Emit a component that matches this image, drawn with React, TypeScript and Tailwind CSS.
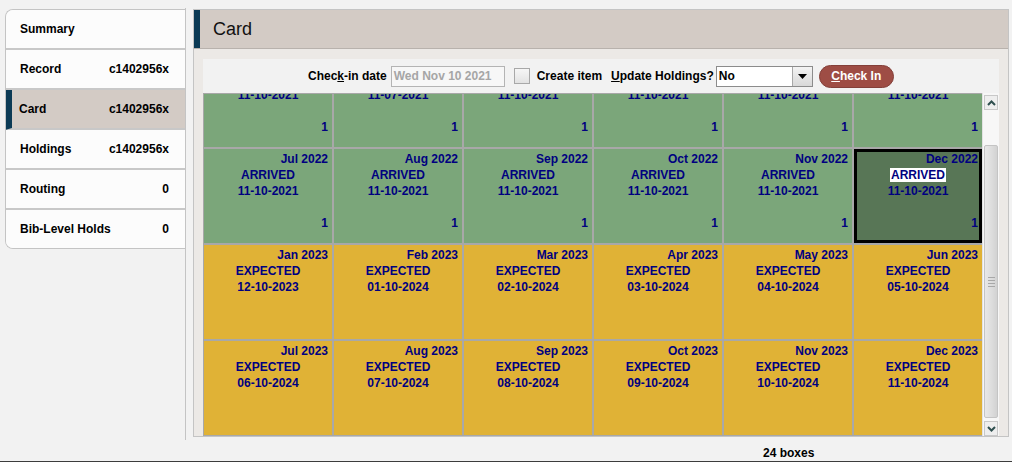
import React from "react";

// One box of the check-in card
interface Box {
  month: string;
  status: "ARRIVED" | "EXPECTED";
  date: string;
  count?: number;
  selected?: boolean;
}

const arrived = (month: string, date = "11-10-2021", selected = false): Box => ({
  month,
  status: "ARRIVED",
  date,
  count: 1,
  selected,
});

const expected = (month: string, date: string): Box => ({
  month,
  status: "EXPECTED",
  date,
});

const boxes: Box[] = [
  arrived("Jan 2022"),
  arrived("Feb 2022", "11-07-2021"),
  arrived("Mar 2022"),
  arrived("Apr 2022"),
  arrived("May 2022"),
  arrived("Jun 2022"),
  arrived("Jul 2022"),
  arrived("Aug 2022"),
  arrived("Sep 2022"),
  arrived("Oct 2022"),
  arrived("Nov 2022"),
  arrived("Dec 2022", "11-10-2021", true),
  expected("Jan 2023", "12-10-2023"),
  expected("Feb 2023", "01-10-2024"),
  expected("Mar 2023", "02-10-2024"),
  expected("Apr 2023", "03-10-2024"),
  expected("May 2023", "04-10-2024"),
  expected("Jun 2023", "05-10-2024"),
  expected("Jul 2023", "06-10-2024"),
  expected("Aug 2023", "07-10-2024"),
  expected("Sep 2023", "08-10-2024"),
  expected("Oct 2023", "09-10-2024"),
  expected("Nov 2023", "10-10-2024"),
  expected("Dec 2023", "11-10-2024"),
];

const navItems = [
  { label: "Summary", value: "" },
  { label: "Record", value: "c1402956x" },
  { label: "Card", value: "c1402956x", active: true },
  { label: "Holdings", value: "c1402956x" },
  { label: "Routing", value: "0" },
  { label: "Bib-Level Holds", value: "0" },
];

const Chevron: React.FC<{ up?: boolean }> = ({ up }) => (
  <svg width="9" height="6" viewBox="0 0 9 6">
    <polyline
      points={up ? "1,5 4.5,1.5 8,5" : "1,1 4.5,4.5 8,1"}
      fill="none"
      stroke="#2f4f4f"
      strokeWidth="2"
    />
  </svg>
);

const BoxCell: React.FC<{ box: Box }> = ({ box }) => {
  const bg = box.selected
    ? "bg-[#587656] shadow-[inset_0_0_0_3px_#000]"
    : box.status === "ARRIVED"
    ? "bg-[#7ba67a]"
    : "bg-[#e0b236]";
  return (
    <div className={`h-[94px] pt-[2px] px-[4px] flex flex-col leading-[16px] text-[12px] font-bold text-[#000080] ${bg}`}>
      <div className="text-right">{box.month}</div>
      <div className="text-center">
        <span className={box.selected ? "bg-white px-[1px]" : ""}>{box.status}</span>
      </div>
      <div className="text-center">{box.date}</div>
      <div className="h-[16px]" />
      <div className="text-right">{box.count ?? ""}</div>
    </div>
  );
};

export default function App() {
  return (
    <div className="w-[1012px] h-[462px] bg-[#f2f2f2] flex flex-col font-['Liberation_Sans',Arial,sans-serif] text-black overflow-hidden">
      <div className="flex h-[440px]">
        {/* Left navigation */}
        <div className="w-[186px] mt-[8px] pt-[1px] pl-[5px] border-r border-[#c4c4c4]">
          <div className="border border-r-0 border-[#c4c4c4] rounded-l-[8px] overflow-hidden">
            {navItems.map((item, i) => (
              <div
                key={item.label}
                className={`h-[38px] flex items-center justify-between pr-[16px] text-[12px] font-bold box-content ${
                  i < navItems.length - 1 ? "border-b-2 border-[#c8c8c8]" : ""
                } ${item.active ? "bg-[#d3cbc5] -ml-[1px] pl-[7px] border-l-[7px] border-l-[#0b3a55]" : "bg-[#fcfcfc] pl-[14px]"}`}
              >
                <span>{item.label}</span>
                <span>{item.value}</span>
              </div>
            ))}
          </div>
        </div>

        {/* Card panel */}
        <div className="ml-[7px] mt-[9px] w-[816px] h-[428px] border border-[#c4c4c4] bg-[#ece9e6] flex flex-col">
          <div className="h-[39px] flex items-stretch bg-[#d3cbc5] border-b border-[#b8b2ad]">
            <div className="w-[6px] bg-[#0b3a55]" />
            <div className="pl-[13px] flex items-center text-[18px] text-[#111]">Card</div>
          </div>

          <div className="px-[9px] pt-[10px]">
            {/* Toolbar */}
            <div className="h-[34px] bg-[#f2f2f2] flex items-center pl-[105px] text-[12px] font-bold">
              <span>
                Chec<span className="underline">k</span>-in date
              </span>
              <div className="ml-[4px] w-[114px] h-[21px] border border-[#b4b4b4] bg-[#f7f7f7] flex items-center pl-[2px] text-[#a6a6a6]">
                Wed Nov 10 2021
              </div>
              <div className="ml-[9px] w-[16px] h-[16px] border border-[#a8a8a8] bg-gradient-to-b from-[#f6f6f6] to-[#e2e2e2]" />
              <span className="ml-[7px]">Create item</span>
              <span className="ml-[9px]">
                <span className="underline">U</span>pdate Holdings?
              </span>
              <div className="ml-[2px] w-[97px] h-[21px] border border-[#8c8c8c] bg-white flex items-stretch">
                <div className="flex-1 flex items-center pl-[2px]">No</div>
                <div className="w-[20px] border-l border-[#a8a8a8] bg-gradient-to-b from-[#f4f4f4] to-[#d8d8d8] flex items-center justify-center">
                  <svg width="9" height="5" viewBox="0 0 9 5">
                    <polygon points="0,0 9,0 4.5,5" fill="#000" />
                  </svg>
                </div>
              </div>
              <button className="ml-[6px] w-[75px] h-[23px] rounded-full bg-[#9e4d45] border border-[#84403a] text-white text-[12px] font-bold">
                <span className="underline">C</span>heck In
              </button>
            </div>

            {/* Boxes grid with scrollbar */}
            <div className="flex h-[343px]">
              <div className="w-[779px] border-l border-t border-b border-[#a8a8a8] overflow-hidden">
                <div className="grid grid-cols-6 gap-[2px] bg-[#a8a8a8] -mt-[41px]">
                  {boxes.map((b) => (
                    <BoxCell key={b.month} box={b} />
                  ))}
                </div>
              </div>
              <div className="w-[17px] bg-[#f7f7f7] border-l border-[#e2e2e2] px-[1px] pt-[2px] flex flex-col">
                <div className="h-[15px] border border-[#c8c8c8] bg-[#eeeeee] flex items-center justify-center">
                  <Chevron up />
                </div>
                <div className="h-[35px]" />
                <div className="h-[273px] border border-[#c4c4c4] rounded-[2px] bg-gradient-to-r from-[#e8e8e8] via-[#dedede] to-[#d2d2d2] flex flex-col items-center justify-center gap-[2px]">
                  <div className="w-[7px] h-[1px] bg-[#a8a8a8]" />
                  <div className="w-[7px] h-[1px] bg-[#a8a8a8]" />
                  <div className="w-[7px] h-[1px] bg-[#a8a8a8]" />
                  <div className="w-[7px] h-[1px] bg-[#a8a8a8]" />
                </div>
                <div className="flex-1" />
                <div className="h-[15px] border border-[#c8c8c8] bg-[#eeeeee] flex items-center justify-center">
                  <Chevron />
                </div>
              </div>
            </div>
          </div>
        </div>
      </div>

      {/* Footer count */}
      <div className="h-[22px] border-b border-[#3c3c3c] pl-[763px] pt-[6px] text-[12px] leading-[14px] font-bold">
        24 boxes
      </div>
    </div>
  );
}
